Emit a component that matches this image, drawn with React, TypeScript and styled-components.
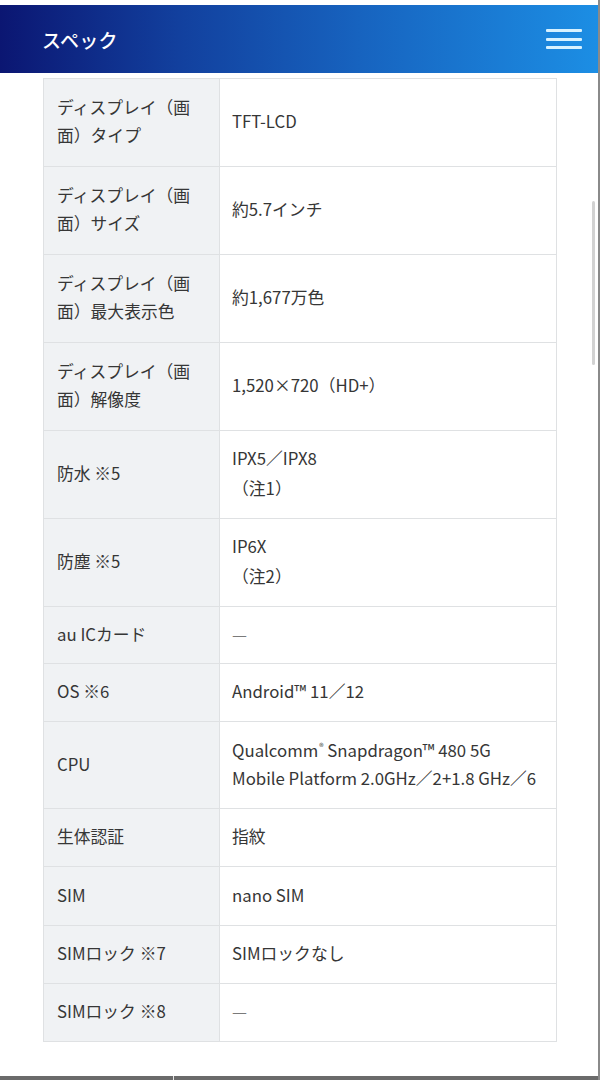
import React from "react";
import styled, { createGlobalStyle } from "styled-components";

const Global = createGlobalStyle`
  html, body { margin: 0; padding: 0; background: #ffffff; }
  body {
    font-family: "Noto Sans CJK JP", "Noto Sans", sans-serif;
    color: #363636;
    -webkit-font-smoothing: antialiased;
  }
  * { box-sizing: border-box; }
`;

const Page = styled.div`
  position: relative;
  width: 600px;
  height: 1080px;
  overflow: hidden;
  background: #ffffff;
  padding-top: 5px;
  border-right: 2px solid #8a8a8a;
  display: flex;
  flex-direction: column;
`;

const Header = styled.header`
  height: 68px;
  flex: 0 0 auto;
  display: flex;
  align-items: center;
  justify-content: space-between;
  padding: 0 16px 0 42px;
  background: linear-gradient(90deg, #0b1672 0%, #12409e 30%, #1763bf 60%, #1c8ee4 100%);
`;

const Title = styled.h1`
  margin: 0;
  font-size: 19px;
  font-weight: 500;
  color: #ffffff;
  letter-spacing: 0.3px;
`;

const Burger = styled.button`
  width: 36px;
  height: 20px;
  padding: 0;
  border: 0;
  background: transparent;
  display: flex;
  flex-direction: column;
  justify-content: space-between;
  span {
    display: block;
    height: 3px;
    border-radius: 1px;
    background: #d6f1ff;
  }
`;

const Content = styled.main`
  flex: 1 1 auto;
  padding: 5px 0 0 43px;
`;

const Table = styled.div`
  width: 514px;
  border: 1px solid #dfe1e3;
  border-bottom: 0;
`;

const Row = styled.div<{ $h?: number }>`
  display: grid;
  grid-template-columns: 176px 1fr;
  min-height: ${(p) => p.$h ?? 58}px;
  border-bottom: 1px solid #dfe1e3;
`;

const Label = styled.div`
  display: flex;
  align-items: center;
  padding: 0 12px 3px 13px;
  background: #f0f2f4;
  border-right: 1px solid #dfe1e3;
  font-size: 16.8px;
  line-height: 28px;
`;

const Value = styled.div<{ $gap?: number }>`
  display: flex;
  flex-direction: column;
  justify-content: center;
  gap: ${(p) => p.$gap ?? 0}px;
  padding: 0 12px 3px 12px;
  background: #ffffff;
  font-size: 16.8px;
  line-height: 28px;
  white-space: nowrap;
  sup {
    font-size: 9px;
    line-height: 0;
    vertical-align: 7px;
    margin-left: 1px;
  }
`;

const Dash = styled.span`
  color: #7a7a7a;
`;

const ScrollThumb = styled.div`
  position: absolute;
  left: 592px;
  top: 201px;
  width: 3px;
  height: 164px;
  border-radius: 2px;
  background: #d2d2d2;
`;

const BottomBar = styled.div`
  position: absolute;
  left: 0;
  right: 0;
  bottom: 0;
  height: 4px;
  background: #6b6b6b;
  &::after {
    content: "";
    position: absolute;
    left: 173px;
    top: 0;
    width: 1px;
    height: 4px;
    background: #e8e8e8;
  }
`;

type Spec = { label: string; value: React.ReactNode; h: number; gap?: number };

const specs: Spec[] = [
  { label: "ディスプレイ（画面）タイプ", value: "TFT-LCD", h: 88 },
  { label: "ディスプレイ（画面）サイズ", value: "約5.7インチ", h: 88 },
  { label: "ディスプレイ（画面）最大表示色", value: "約1,677万色", h: 88 },
  { label: "ディスプレイ（画面）解像度", value: "1,520×720（HD+）", h: 88 },
  {
    label: "防水 ※5",
    value: (
      <>
        <span>IPX5／IPX8</span>
        <span>（注1）</span>
      </>
    ),
    h: 88,
    gap: 2,
  },
  {
    label: "防塵 ※5",
    value: (
      <>
        <span>IP6X</span>
        <span>（注2）</span>
      </>
    ),
    h: 88,
    gap: 2,
  },
  { label: "au ICカード", value: <Dash>—</Dash>, h: 57 },
  { label: "OS ※6", value: "Android™ 11／12", h: 58 },
  {
    label: "CPU",
    value: (
      <>
        <span>
          Qualcomm<sup>®</sup> Snapdragon™ 480 5G
        </span>
        <span>Mobile Platform 2.0GHz／2+1.8 GHz／6</span>
      </>
    ),
    h: 87,
  },
  { label: "生体認証", value: "指紋", h: 58 },
  { label: "SIM", value: "nano SIM", h: 59 },
  { label: "SIMロック ※7", value: "SIMロックなし", h: 58 },
  { label: "SIMロック ※8", value: <Dash>—</Dash>, h: 58 },
];

export default function App() {
  return (
    <>
      <Global />
      <Page>
        <Header>
          <Title>スペック</Title>
          <Burger aria-label="menu">
            <span />
            <span />
            <span />
          </Burger>
        </Header>
        <Content>
          <Table>
            {specs.map((s, i) => (
              <Row key={i} $h={s.h}>
                <Label>{s.label}</Label>
                <Value $gap={s.gap}>{s.value}</Value>
              </Row>
            ))}
          </Table>
        </Content>
        <ScrollThumb />
        <BottomBar />
      </Page>
    </>
  );
}
